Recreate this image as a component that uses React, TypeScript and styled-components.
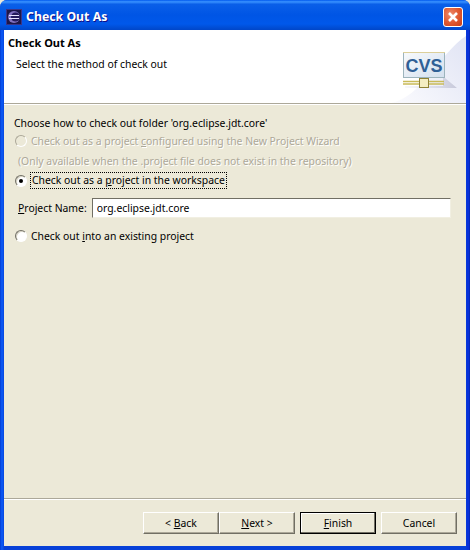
import React from 'react';
import styled, { createGlobalStyle } from 'styled-components';

const GlobalStyle = createGlobalStyle`
  html, body {
    margin: 0;
    padding: 0;
    background: #ece9d8;
  }
  * {
    box-sizing: border-box;
  }
`;

const Window = styled.div`
  width: 470px;
  height: 550px;
  display: flex;
  flex-direction: column;
  overflow: hidden;
  border-radius: 7px 7px 0 0;
  background: linear-gradient(90deg, #0031c8 0, #0a55f0 1px, #0a55f0 3px, #0640d8 4px, #0640d8 466px, #0831d9 467px, #0831d9 469px, #001ea0 470px);
  font-family: "Noto Sans", "Liberation Sans", sans-serif;
  font-size: 10.4px;
  color: #000;
`;

const TitleBar = styled.div`
  height: 30px;
  flex: none;
  display: flex;
  align-items: center;
  padding: 3px 7px 0 6px;
  gap: 4px;
  background: linear-gradient(180deg, #0058ee 0%, #3a93ff 6%, #0a5fe8 14%, #0055e5 50%, #0058ea 80%, #0046c8 100%);
`;

const TitleText = styled.div`
  flex: 1;
  color: #fff;
  font-size: 12.3px;
  font-weight: 700;
  text-shadow: 1px 1px 0 #0f1089;
`;

const CloseButton = styled.div`
  width: 20px;
  height: 20px;
  display: flex;
  align-items: center;
  justify-content: center;
  border: 1px solid #fff;
  border-radius: 3px;
  background: radial-gradient(circle at 35% 35%, #ee8a6c 0%, #e05a33 50%, #c83c14 100%);
`;

const Client = styled.div`
  flex: 1;
  display: flex;
  flex-direction: column;
  margin: 0 4px 4px;
  background: #ece9d8;
`;

const Banner = styled.div`
  height: 73px;
  flex: none;
  display: flex;
  justify-content: space-between;
  background: #fff;
`;

const BannerText = styled.div`
  display: flex;
  flex-direction: column;
  padding: 5px 0 0 4px;
`;

const BannerTitle = styled.div`
  font-size: 11px;
  font-weight: 700;
  line-height: 15px;
`;

const BannerMessage = styled.div`
  margin: 7px 0 0 8px;
  line-height: 15px;
`;

const Rule = styled.div`
  height: 2px;
  flex: none;
  background: linear-gradient(180deg, #aca899 50%, #fff 50%);
`;

const Body = styled.div`
  flex: 1;
  display: flex;
  flex-direction: column;
  padding: 11px 15px 0 10px;
`;

const Prompt = styled.div`
  line-height: 15px;
  height: 15px;
`;

const RadioRow = styled.label<{ $top: number }>`
  display: flex;
  align-items: center;
  height: 15px;
  gap: 4px;
  margin: ${p => p.$top}px 0 0 1px;
`;

const RadioDot = styled.span<{ $on?: boolean; $disabled?: boolean }>`
  width: 12px;
  height: 12px;
  flex: none;
  border-radius: 50%;
  display: flex;
  align-items: center;
  justify-content: center;
  border: 1px solid;
  border-color: ${p => (p.$disabled ? '#aca899 #fff #fff #aca899' : '#716f64 #fff #fff #716f64')};
  background: ${p => (p.$disabled ? '#ece9d8' : '#fff')};
  box-shadow: ${p => (p.$disabled ? 'none' : 'inset 1px 1px 0 #d8d5c6')};
  &::after {
    content: '';
    display: ${p => (p.$on ? 'block' : 'none')};
    width: 4px;
    height: 4px;
    border-radius: 50%;
    background: #000;
  }
`;

const DisabledText = styled.span`
  color: #aca899;
  text-shadow: 1px 1px 0 #fff;
`;

const Note = styled(DisabledText)`
  display: block;
  margin: 6px 0 0 4px;
  line-height: 15px;
`;

const Focused = styled.span`
  outline: 1px dotted #000;
  outline-offset: 0;
  padding: 0 1px;
  line-height: 15px;
`;

const FieldRow = styled.div`
  display: flex;
  align-items: center;
  margin: 10px 0 0 4px;
  gap: 5px;
`;

const NameInput = styled.input`
  flex: 1;
  min-width: 0;
  height: 20px;
  padding: 0 4px;
  font: inherit;
  color: #000;
  background: #fff;
  border: 1px solid;
  border-color: #716f64 #f1efe2 #f1efe2 #716f64;
  outline: none;
`;

const Footer = styled.div`
  flex: none;
  height: 46px;
  display: flex;
  justify-content: flex-end;
  padding: 12px 9px 0 0;
`;

const Button = styled.div<{ $gap?: number; $default?: boolean }>`
  width: 76px;
  height: 22px;
  margin-left: ${p => p.$gap ?? 0}px;
  display: flex;
  align-items: center;
  justify-content: center;
  background: #ece9d8;
  border: 1px solid;
  border-color: ${p => (p.$default ? '#000' : '#fff #716f64 #716f64 #fff')};
  box-shadow: ${p => (p.$default ? 'inset -1px -1px 0 #716f64, inset 1px 1px 0 #fff' : 'inset -1px -1px 0 #aca899')};
`;

const Key = styled.span`
  text-decoration: underline;
`;

const EclipseIcon = () => (
  <svg width="16" height="16" viewBox="0 0 16 16">
    <rect width="16" height="16" fill="#3a3488" />
    <rect x="1" y="1" width="14" height="14" fill="#1d1748" />
    <circle cx="8" cy="8" r="6" fill="#7f70c0" />
    <circle cx="9.5" cy="8" r="4.5" fill="#251c5c" />
    <path d="M3 6.5h10M3 9.5h10" stroke="#e8e4ff" strokeWidth="1" />
  </svg>
);

const CloseIcon = () => (
  <svg width="12" height="12" viewBox="0 0 12 12">
    <path d="M2 2l8 8M10 2l-8 8" stroke="#fff" strokeWidth="2.6" />
  </svg>
);

const CvsBanner = () => (
  <svg width="75" height="73" viewBox="0 0 75 73">
    <defs>
      <linearGradient id="wash" x1="0" y1="1" x2="1" y2="0.2">
        <stop offset="0" stopColor="#fbfbfe" />
        <stop offset="1" stopColor="#e3e6f5" />
      </linearGradient>
      <linearGradient id="screen" x1="0" y1="0" x2="1" y2="1">
        <stop offset="0" stopColor="#f8fafc" />
        <stop offset="1" stopColor="#d3dfee" />
      </linearGradient>
      <linearGradient id="cast" x1="0" y1="0" x2="1" y2="0">
        <stop offset="0" stopColor="#d8d8e4" stopOpacity="0.2" />
        <stop offset="1" stopColor="#c4c6d8" stopOpacity="0.9" />
      </linearGradient>
    </defs>
    <path d="M0 73C30 68 50 22 75 6V73Z" fill="url(#wash)" />
    <path d="M14 58H66L54 48H52V56H14Z" fill="url(#cast)" />
    <rect x="12.5" y="22.5" width="41" height="25" fill="url(#screen)" stroke="#9db4bd" />
    <path d="M12 22.5h42" stroke="#dccf9a" />
    <text x="33" y="42" textAnchor="middle" fontFamily="'Liberation Sans', sans-serif" fontWeight="700" fontSize="18" fill="#2f5f96">CVS</text>
    <path d="M33 48v3" stroke="#8f8236" />
    <path d="M12 51.5h41M12 54h41" stroke="#c9bb58" strokeWidth="1.4" />
    <rect x="28.5" y="48.5" width="9" height="9" fill="#f4edc2" stroke="#8f8236" />
  </svg>
);

export default function App() {
  return (
    <Window>
      <GlobalStyle />
      <TitleBar>
        <EclipseIcon />
        <TitleText>Check Out As</TitleText>
        <CloseButton>
          <CloseIcon />
        </CloseButton>
      </TitleBar>
      <Client>
        <Banner>
          <BannerText>
            <BannerTitle>Check Out As</BannerTitle>
            <BannerMessage>Select the method of check out</BannerMessage>
          </BannerText>
          <CvsBanner />
        </Banner>
        <Rule />
        <Body>
          <Prompt>Choose how to check out folder 'org.eclipse.jdt.core'</Prompt>
          <RadioRow $top={2}>
            <RadioDot $disabled />
            <DisabledText>Check out as a project <Key>c</Key>onfigured using the New Project Wizard</DisabledText>
          </RadioRow>
          <Note>(Only available when the .project file does not exist in the repository)</Note>
          <RadioRow $top={4}>
            <RadioDot $on />
            <Focused>Check out as a <Key>p</Key>roject in the workspace</Focused>
          </RadioRow>
          <FieldRow>
            <span><Key>P</Key>roject Name:</span>
            <NameInput readOnly value="org.eclipse.jdt.core" />
          </FieldRow>
          <RadioRow $top={10}>
            <RadioDot />
            <span>Check out <Key>i</Key>nto an existing project</span>
          </RadioRow>
        </Body>
        <Rule />
        <Footer>
          <Button><span>&lt; <Key>B</Key>ack</span></Button>
          <Button><span><Key>N</Key>ext &gt;</span></Button>
          <Button $gap={5} $default><span><Key>F</Key>inish</span></Button>
          <Button $gap={5}><span>Cancel</span></Button>
        </Footer>
      </Client>
    </Window>
  );
}
